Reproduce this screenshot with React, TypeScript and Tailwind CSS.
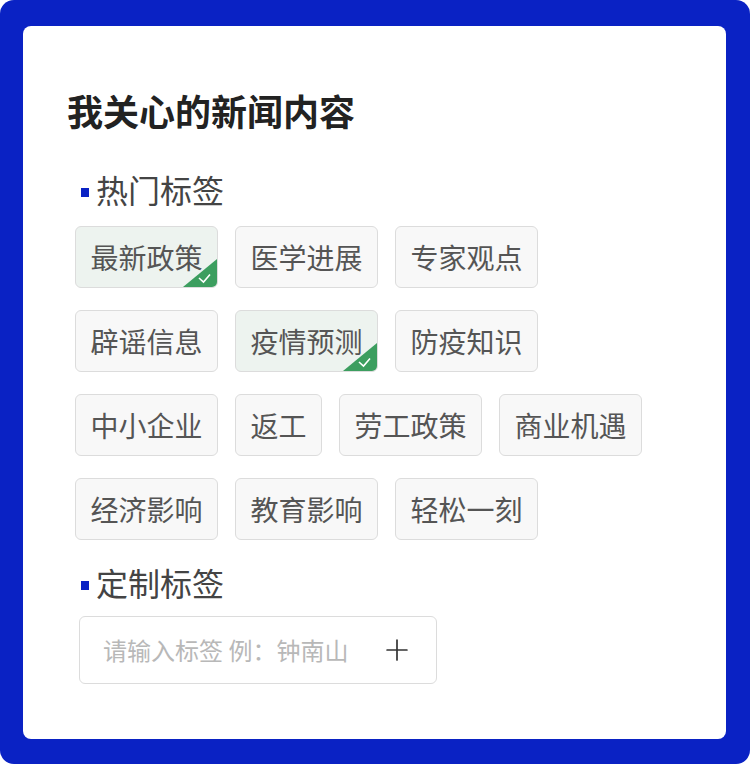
import { Plus } from "lucide-react";

type Tag = { label: string; active?: boolean };

const hotTags: Tag[][] = [
  [{ label: "最新政策", active: true }, { label: "医学进展" }, { label: "专家观点" }],
  [{ label: "辟谣信息" }, { label: "疫情预测", active: true }, { label: "防疫知识" }],
  [{ label: "中小企业" }, { label: "返工" }, { label: "劳工政策" }, { label: "商业机遇" }],
  [{ label: "经济影响" }, { label: "教育影响" }, { label: "轻松一刻" }],
];

const font = { fontFamily: '"Noto Sans CJK SC", "Noto Sans", sans-serif' };

function SectionTitle({ text }: { text: string }) {
  return (
    <div className="flex items-center pl-[6px]">
      <span className="w-[8px] h-[9px] bg-[#0a22c4] mt-[6px] mr-[7px]" />
      <span className="text-[32px] leading-[40px] text-[#444]">{text}</span>
    </div>
  );
}

function TagChip({ tag }: { tag: Tag }) {
  return (
    <div
      className={`relative overflow-hidden h-[62px] px-[14.5px] flex items-center rounded-[6px] border-[1.5px] border-[#dcdcdc] text-[28px] text-[#555] ${
        tag.active ? "bg-[#edf3ef]" : "bg-[#f8f8f8]"
      }`}
    >
      {tag.label}
      {tag.active && (
        <svg className="absolute right-0 bottom-0" width="34" height="28" viewBox="0 0 34 28">
          <polygon points="34,0 34,28 0,28" fill="#3c9e5f" />
          <path d="M16 19 L20.5 23 L27 15.5" fill="none" stroke="#fff" strokeWidth="1.6" />
        </svg>
      )}
    </div>
  );
}

export default function App() {
  return (
    <div className="w-[750px] h-[764px] bg-[#0a22c4] rounded-[14px] pt-[26px] pl-[23px] pr-[24px] pb-[25px]" style={font}>
      <div className="h-full bg-white rounded-[8px] pl-[44px] pt-[60px]">
        <h1 className="text-[36px] leading-[48px] font-bold text-[#222]">我关心的新闻内容</h1>

        <div className="pl-[8px] mt-[35px]">
          <SectionTitle text="热门标签" />
          <div className="flex flex-col gap-[22px] mt-[17px]">
            {hotTags.map((row, i) => (
              <div key={i} className="flex gap-[17px]">
                {row.map((tag) => (
                  <TagChip key={tag.label} tag={tag} />
                ))}
              </div>
            ))}
          </div>

          <div className="mt-[22px]">
            <SectionTitle text="定制标签" />
          </div>
          <div className="ml-[4px] mt-[14px] w-[358px] h-[68px] rounded-[6px] border-[1.5px] border-[#dcdcdc] flex items-center justify-between pl-[23px] pr-[22px]">
            <span className="text-[24px] text-[#b8b8b8]">请输入标签 例：钟南山</span>
            <Plus size={34} strokeWidth={1.2} color="#333" />
          </div>
        </div>
      </div>
    </div>
  );
}
